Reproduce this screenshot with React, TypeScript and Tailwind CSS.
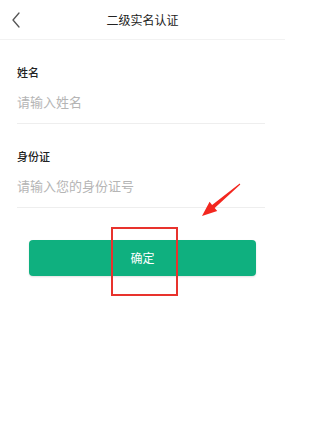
import React from 'react'

const font = { fontFamily: '"Noto Sans CJK SC", "Noto Sans", sans-serif' }

type FieldProps = {
  label: string
  placeholder: string
}

const Field: React.FC<FieldProps> = ({ label, placeholder }) => (
  <div className="flex flex-col pt-[24px] pb-[11px] border-b border-[#eeeeee]">
    <label className="text-[11px] leading-[17px] text-[#222222] font-medium">{label}</label>
    <input
      className="mt-[11px] h-[20px] text-[13px] leading-[20px] text-[#333333] placeholder:text-[#b5b5b5] outline-none bg-transparent"
      placeholder={placeholder}
    />
  </div>
)

export default function App() {
  return (
    <div className="w-[285px] h-[438px] bg-white overflow-hidden" style={font}>
      {/* header */}
      <div className="relative flex items-center justify-center h-10 border-b border-[#f2f2f2]">
        <button className="absolute left-[8px] top-[10px] w-[16px] h-[20px] flex items-center justify-center">
          <svg width="10" height="16" viewBox="0 0 10 16" fill="none">
            <polyline points="8,1 2,8 8,15" stroke="#555555" strokeWidth="1.3" strokeLinejoin="round" strokeLinecap="round" />
          </svg>
        </button>
        <h1 className="text-[12px] text-[#222222]">二级实名认证</h1>
      </div>

      {/* form */}
      <div className="pl-[17px] pr-[20px]">
        <Field label="姓名" placeholder="请输入姓名" />
        <Field label="身份证" placeholder="请输入您的身份证号" />
      </div>

      {/* submit */}
      <div className="px-[29px] mt-[32px]">
        <div className="relative">
          <button className="w-full h-[36px] rounded-[4px] bg-[#0fb07f] text-white text-[12px] flex items-center justify-center shadow-[0_1px_2px_rgba(0,0,0,0.12)]">
            确定
          </button>
          {/* annotation box */}
          <div className="absolute left-[82px] top-[-13px] w-[67px] h-[69px] border-2 border-[#e8322d] pointer-events-none" />
          {/* annotation arrow */}
          <svg
            className="absolute left-[168px] top-[-60px] pointer-events-none"
            width="50"
            height="40"
            viewBox="0 0 50 40"
          >
            <polygon
              points="42.7,3.6 43.3,4.4 17.7,27.9 20.2,31 5,36 12.6,21.8 15.1,24.9"
              fill="#f3271f"
            />
          </svg>
        </div>
      </div>
    </div>
  )
}
